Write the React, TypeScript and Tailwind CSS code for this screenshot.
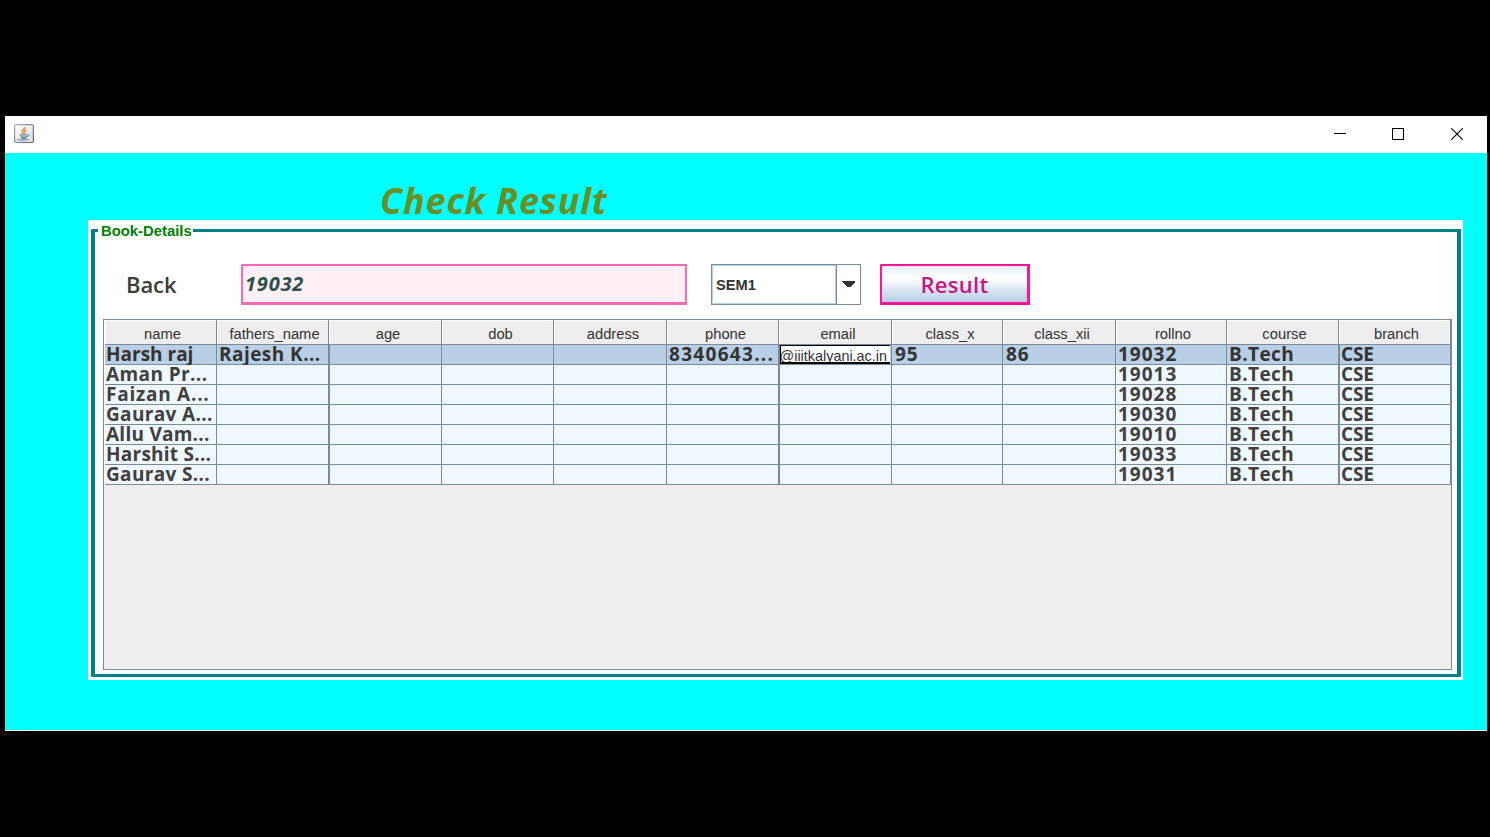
type Cell = { text: string; tracking: string };

const COLUMNS =
  "grid grid-cols-[112px_112px_113px_112px_113px_112px_113px_111px_113px_111px_112px_112px]";

const headers = [
  "name",
  "fathers_name",
  "age",
  "dob",
  "address",
  "phone",
  "email",
  "class_x",
  "class_xii",
  "rollno",
  "course",
  "branch",
];

const names: Cell[] = [
  { text: "Harsh raj", tracking: "tracking-[0px]" },
  { text: "Aman Pr...", tracking: "tracking-[0.4px]" },
  { text: "Faizan A...", tracking: "tracking-[0.75px]" },
  { text: "Gaurav A...", tracking: "tracking-[0.35px]" },
  { text: "Allu Vam...", tracking: "tracking-[0.25px]" },
  { text: "Harshit S...", tracking: "tracking-[0.25px]" },
  { text: "Gaurav S...", tracking: "tracking-[0.35px]" },
];

const rolls = ["19032", "19013", "19028", "19030", "19010", "19033", "19031"];

const empty: Cell = { text: "", tracking: "" };

const rows: Cell[][] = names.map((name, i) => {
  const first = i === 0;
  return [
    name,
    first ? { text: "Rajesh K...", tracking: "tracking-[0.45px]" } : empty,
    empty,
    empty,
    empty,
    first ? { text: "8340643...", tracking: "tracking-[1.3px]" } : empty,
    empty,
    first ? { text: "95", tracking: "tracking-[0.8px]" } : empty,
    first ? { text: "86", tracking: "tracking-[0.8px]" } : empty,
    { text: rolls[i], tracking: "tracking-[1px]" },
    { text: "B.Tech", tracking: "tracking-[0.4px]" },
    { text: "CSE", tracking: "tracking-[-0.2px]" },
  ];
});

// Columns drawn with a doubled left rule.
const doubled = [2, 6, 11];
const indent = ["pl-px", "pl-[2px]", "pl-px", "pl-px", "pl-px", "pl-[2px]", "pl-px", "pl-[3px]", "pl-[3px]", "pl-[2px]", "pl-[2px]", "pl-px"];

function JavaIcon() {
  return (
    <svg width="20" height="20" viewBox="0 0 20 20" fill="none">
      <defs>
        <linearGradient id="tile" x1="0" y1="0" x2="1" y2="1">
          <stop offset="0" stopColor="#ffffff" />
          <stop offset="1" stopColor="#dcdcdc" />
        </linearGradient>
        <linearGradient id="edge" x1="0" y1="0" x2="1" y2="1">
          <stop offset="0" stopColor="#9fb2c4" />
          <stop offset="1" stopColor="#4f6578" />
        </linearGradient>
      </defs>
      <rect x="0.6" y="0.6" width="18.8" height="17.9" rx="1.5" fill="url(#tile)" stroke="url(#edge)" strokeWidth="1.2" />
      <path d="M10.8 3.2C11.4 5 7.2 5.8 8.2 8c.3.7.9 1.1 1.2 1.7M12.2 5.8C9.6 6.8 11 8 10.2 9.6" stroke="#e8883a" strokeWidth="1.5" />
      <path d="M5.4 10.8h8M6.4 12.5c1.6.6 4.8.6 6.6 0M7 14.1c1.4.5 3.8.5 5.2 0" stroke="#5b84a3" strokeWidth="1.2" />
      <path d="M13.3 10.4c2.3-.4 2 2-.5 2.4" stroke="#5b84a3" />
      <path d="M3.6 14.9c-.8 1.8 8.9 1.8 11.2.2" stroke="#6e91ab" strokeWidth="1.1" />
    </svg>
  );
}

function TitleBar() {
  return (
    <div className="flex h-[37px] shrink-0 items-start justify-between bg-white pr-[23px] pl-[9px]">
      <div className="pt-2">
        <JavaIcon />
      </div>
      <div className="flex gap-[46px] pt-3">
        <svg width="12" height="12" viewBox="0 0 12 12" shapeRendering="crispEdges">
          <path d="M0 5.5h12" stroke="#000" />
        </svg>
        <svg width="12" height="12" viewBox="0 0 12 12" fill="none" shapeRendering="crispEdges">
          <rect x="0.5" y="0.5" width="11" height="11" stroke="#000" />
        </svg>
        <svg width="13" height="12" viewBox="0 0 13 12" className="ml-px">
          <path d="M0.3 0.3l11.4 11.4M11.7 0.3L0.3 11.7" stroke="#000" strokeWidth="1.1" />
        </svg>
      </div>
    </div>
  );
}

function SearchBar() {
  return (
    <div className="flex h-[41px] items-stretch font-['Open_Sans',sans-serif] font-semibold">
      <div className="w-[115px] text-[22px] leading-10 tracking-[-0.1px] text-[#3c3c3c]">Back</div>
      <div className="w-[446px] rounded-tl-[1px] border-2 border-b-[3px] border-[#ff69b4] bg-[#fff0f5] pl-[2px] text-xl leading-9 font-bold tracking-[0.8px] text-[#2f4f4f] italic">
        19032
      </div>
      <div className="ml-[24px] flex w-[150px] border border-[#7a8a99] bg-white font-['Liberation_Sans',Arial,sans-serif]">
        <div className="w-[124px] shrink-0 border border-[#b8cfe5] pl-[3px] text-[14.67px] leading-[38px] font-bold text-[#333333]">
          SEM1
        </div>
        <div className="flex grow items-center border-l border-[#7a8a99] pl-[5px]">
          <svg width="13" height="6" viewBox="0 0 13 6" className="mb-px" shapeRendering="crispEdges">
            <path d="M0 0h13v1l-5 5h-3l-5-5z" fill="#333" />
          </svg>
        </div>
      </div>
      <button
        type="button"
        className="ml-[19px] w-[150px] rounded-tl-[1px] border-2 border-r-[3px] border-b-[3px] border-[#ff1493] bg-[linear-gradient(180deg,#e2ebf4_0%,#ffffff_30%,#ffffff_36%,#dde8f3_62%,#b8cfe5_100%)] pb-[2px] text-center text-[22px] leading-[36px] tracking-[0.3px] text-[#c71585]"
      >
        Result
      </button>
    </div>
  );
}

function ResultTable() {
  return (
    <div className="mt-[14px] ml-[8px] h-[351px] w-[1349px] border border-[#7a8a99] bg-[#eeeeee]">
      <div className={`${COLUMNS} h-[25px] border-l border-white font-['Liberation_Sans',Arial,sans-serif] text-[14.75px] leading-[27px] text-[#333333]`}>
        {headers.map((h, c) => (
          <div key={h} className="border-r border-b border-[#7a8a99]">
            <div className={`h-6 border-t border-l border-white text-center ${c > 1 && c < 9 ? "pl-[5px]" : "pl-[3px]"}`}>{h}</div>
          </div>
        ))}
      </div>
      {rows.map((row, r) => (
        <div
          key={r}
          className={`${COLUMNS} h-5 border-l border-white font-['Open_Sans',sans-serif] text-[19px] leading-[18px] font-bold whitespace-nowrap ${
            r === 0 ? "text-[#333333]" : "text-[#404040]"
          }`}
        >
          {row.map((cell, c) => (
            <div
              key={c}
              className={`border-r border-b border-[#7a8a99] ${r === 0 ? "bg-[#b8cfe5]" : "bg-[#f0f8ff]"} ${
                doubled.includes(c) ? "border-l" : ""
              } ${indent[c]} ${cell.tracking}`}
            >
              {r === 0 && c === 6 ? (
                <div className="-ml-px flex h-[19px] w-[110px] justify-end overflow-hidden border border-r-0 border-b-2 border-black bg-white pr-[3px] font-['Liberation_Sans',Arial,sans-serif] text-[14.4px] leading-[20px] font-normal">
                  @iiitkalyani.ac.in
                </div>
              ) : (
                cell.text
              )}
            </div>
          ))}
        </div>
      ))}
    </div>
  );
}

export default function App() {
  return (
    <div className="h-[837px] w-[1490px] overflow-hidden bg-black pt-[116px] pl-[5px]">
      <div className="flex h-[615px] w-[1482px] flex-col border-b border-white bg-[#00ffff]">
        <TitleBar />
        <h1 className="h-[67px] pl-[375px] font-['Open_Sans',sans-serif] text-[36px] leading-[96px] font-bold tracking-[0.85px] text-[#6b8e23] italic">
          Check Result
        </h1>
        <div className="ml-[83px] h-[460px] w-[1375px] bg-white pt-[9px] pl-[3px]">
          <div className="relative h-[448px] w-[1370px] rounded-[1px] border-x-4 border-y-[3px] border-[#008080]">
            <div className="absolute -top-[11px] left-[3px] h-5 w-[95px] bg-white pl-[3px] font-['Liberation_Sans',Arial,sans-serif] text-[14.85px] leading-5 font-bold text-[#008000]">
              Book-Details
            </div>
            <div className="pt-[32px] pl-[31px]">
              <SearchBar />
            </div>
            <ResultTable />
          </div>
        </div>
      </div>
    </div>
  );
}
